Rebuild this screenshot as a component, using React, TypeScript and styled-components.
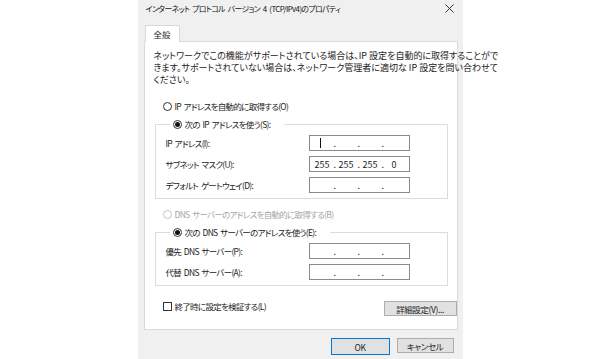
import React from 'react';
import styled, { createGlobalStyle, css } from 'styled-components';

const GlobalStyle = createGlobalStyle`
  html, body {
    margin: 0;
    padding: 0;
    background: #fff;
  }
  body {
    font-family: "Noto Sans CJK JP", "Noto Sans", sans-serif;
    font-feature-settings: "palt";
    color: #222;
  }
`;

const Page = styled.div`
  width: 600px;
  height: 359px;
  display: flex;
  justify-content: center;
  overflow: hidden;
`;

const Dialog = styled.div`
  width: 325px;
  height: 359px;
  background: #f0f0f0;
  display: flex;
  flex-direction: column;
  box-sizing: border-box;
  padding: 0 5px 0 6px;
`;

const TitleBar = styled.div`
  height: 17px;
  display: flex;
  align-items: center;
  justify-content: space-between;
  padding: 0 4px 0 2px;
  font-size: 7.8px;
  letter-spacing: -0.55px;
  word-spacing: 1.5px;
  color: #111;
`;

const CloseIcon = styled.svg`
  width: 9px;
  height: 9px;
`;

const TabStrip = styled.div`
  display: flex;
  margin-top: 8px;
`;

const Tab = styled.div`
  width: 35px;
  height: 17px;
  box-sizing: border-box;
  margin-left: 1px;
  background: #fff;
  border: 1px solid #d9d9d9;
  border-bottom: none;
  font-size: 8.5px;
  display: flex;
  align-items: center;
  justify-content: center;
  position: relative;
  margin-bottom: -1px;
  z-index: 1;
`;

const Panel = styled.div`
  height: 289px;
  box-sizing: border-box;
  background: #fff;
  border: 1px solid #d9d9d9;
  padding: 8px 10px 0 9px;
  display: flex;
  flex-direction: column;
  font-size: 8.5px;
  letter-spacing: -0.7px;
  word-spacing: 1.5px;
`;

const Description = styled.p`
  margin: 0;
  font-size: 9px;
  letter-spacing: 0;
  word-spacing: 0;
  line-height: 12px;
  white-space: nowrap;
`;

const OptionRow = styled.label<{ $disabled?: boolean; $top?: number }>`
  display: flex;
  align-items: center;
  height: 14px;
  gap: 3px;
  margin-top: ${({ $top }) => $top ?? 0}px;
  margin-left: 9px;
  white-space: nowrap;
  color: ${({ $disabled }) => ($disabled ? '#a6a6a6' : '#222')};
`;

const RadioMark = styled.span<{ $checked?: boolean; $disabled?: boolean }>`
  flex: none;
  width: 9px;
  height: 9px;
  box-sizing: border-box;
  border-radius: 50%;
  border: 1px solid ${({ $disabled }) => ($disabled ? '#c4c4c4' : '#333')};
  display: flex;
  align-items: center;
  justify-content: center;
  ${({ $checked }) =>
    $checked &&
    css`
      &::after {
        content: '';
        width: 5px;
        height: 5px;
        border-radius: 50%;
        background: #111;
      }
    `}
`;

const GroupBox = styled.fieldset<{ $top?: number }>`
  margin: ${({ $top }) => $top ?? 0}px 0 0 1px;
  width: 293px;
  box-sizing: border-box;
  border: 1px solid #dcdcdc;
  padding: 4px 10px 5px 10px;
  display: flex;
  flex-direction: column;
  gap: 5px;
`;

const Legend = styled.legend`
  padding: 0 14px 0 3px;
  margin-left: 4px;
  height: 14px;
  display: flex;
  align-items: center;
  gap: 3px;
  white-space: nowrap;
  color: #222;
`;

const FieldRow = styled.div`
  display: grid;
  grid-template-columns: 143px 101px;
  align-items: center;
  height: 16px;
`;

const IpField = styled.div`
  width: 101px;
  height: 16px;
  box-sizing: border-box;
  border: 1px solid #8a8a8a;
  display: flex;
  align-items: center;
  padding-left: 4px;
  font-size: 9px;
  letter-spacing: 0;
`;

const Segment = styled.span`
  width: 17px;
  display: flex;
  justify-content: center;
  align-items: center;
`;

const Dot = styled.span`
  width: 7px;
  box-sizing: border-box;
  padding-left: 3px;
  text-align: left;
`;

const Caret = styled.span`
  width: 1px;
  height: 10px;
  background: #111;
  margin-right: 4px;
`;

const BottomRow = styled.div`
  display: flex;
  justify-content: space-between;
  align-items: flex-start;
  margin-top: 10px;
  width: 303px;
`;

const CheckMark = styled.span`
  flex: none;
  width: 9px;
  height: 9px;
  box-sizing: border-box;
  border: 1px solid #333;
`;

const Button = styled.button<{ $primary?: boolean; $width: number }>`
  width: ${({ $width }) => $width}px;
  height: ${({ $primary }) => ($primary ? 17 : 15)}px;
  box-sizing: border-box;
  background: #e1e1e1;
  border: 1px solid ${({ $primary }) => ($primary ? '#0078d7' : '#adadad')};
  font-family: inherit;
  font-feature-settings: "palt";
  font-size: 8.5px;
  letter-spacing: -0.4px;
  word-spacing: 0;
  color: #222;
  padding: 0;
  display: flex;
  align-items: center;
  justify-content: center;
`;

const AdvancedButton = styled(Button)`
  margin-top: 5px;
`;

const Footer = styled.div`
  display: flex;
  justify-content: flex-end;
  gap: 7px;
  margin-top: 8px;
  padding-right: 4px;
`;

const Address = ({ values, caret }: { values?: string[]; caret?: boolean }) => {
  const parts = values ?? ['', '', '', ''];
  return (
    <IpField>
      {parts.map((v, i) => (
        <React.Fragment key={i}>
          <Segment>{i === 0 && caret ? <Caret /> : v}</Segment>
          {i < 3 && <Dot>.</Dot>}
        </React.Fragment>
      ))}
    </IpField>
  );
};

export default function App() {
  return (
    <>
      <GlobalStyle />
      <Page>
        <Dialog>
          <TitleBar>
            <span>インターネット プロトコル バージョン 4 (TCP/IPv4)のプロパティ</span>
            <CloseIcon viewBox="0 0 10 10">
              <path d="M0.5 0.5 L9.5 9.5 M9.5 0.5 L0.5 9.5" stroke="#222" strokeWidth="1" />
            </CloseIcon>
          </TitleBar>
          <TabStrip>
            <Tab>全般</Tab>
          </TabStrip>
          <Panel>
            <Description>
              ネットワークでこの機能がサポートされている場合は、IP 設定を自動的に取得することがで
              <br />
              きます。サポートされていない場合は、ネットワーク管理者に適切な IP 設定を問い合わせて
              <br />
              ください。
            </Description>
            <OptionRow $top={13}>
              <RadioMark />
              IP アドレスを自動的に取得する(O)
            </OptionRow>
            <GroupBox $top={4}>
              <Legend>
                <RadioMark $checked />
                次の IP アドレスを使う(S):
              </Legend>
              <FieldRow>
                <span>IP アドレス(I):</span>
                <Address caret />
              </FieldRow>
              <FieldRow>
                <span>サブネット マスク(U):</span>
                <Address values={['255', '255', '255', '0']} />
              </FieldRow>
              <FieldRow>
                <span>デフォルト ゲートウェイ(D):</span>
                <Address />
              </FieldRow>
            </GroupBox>
            <OptionRow $top={8} $disabled>
              <RadioMark $disabled />
              DNS サーバーのアドレスを自動的に取得する(B)
            </OptionRow>
            <GroupBox $top={4}>
              <Legend>
                <RadioMark $checked />
                次の DNS サーバーのアドレスを使う(E):
              </Legend>
              <FieldRow>
                <span>優先 DNS サーバー(P):</span>
                <Address />
              </FieldRow>
              <FieldRow>
                <span>代替 DNS サーバー(A):</span>
                <Address />
              </FieldRow>
            </GroupBox>
            <BottomRow>
              <OptionRow $top={3}>
                <CheckMark />
                終了時に設定を検証する(L)
              </OptionRow>
              <AdvancedButton $width={73}>詳細設定(V)...</AdvancedButton>
            </BottomRow>
          </Panel>
          <Footer>
            <Button $primary $width={59}>OK</Button>
            <Button $width={57}>キャンセル</Button>
          </Footer>
        </Dialog>
      </Page>
    </>
  );
}
